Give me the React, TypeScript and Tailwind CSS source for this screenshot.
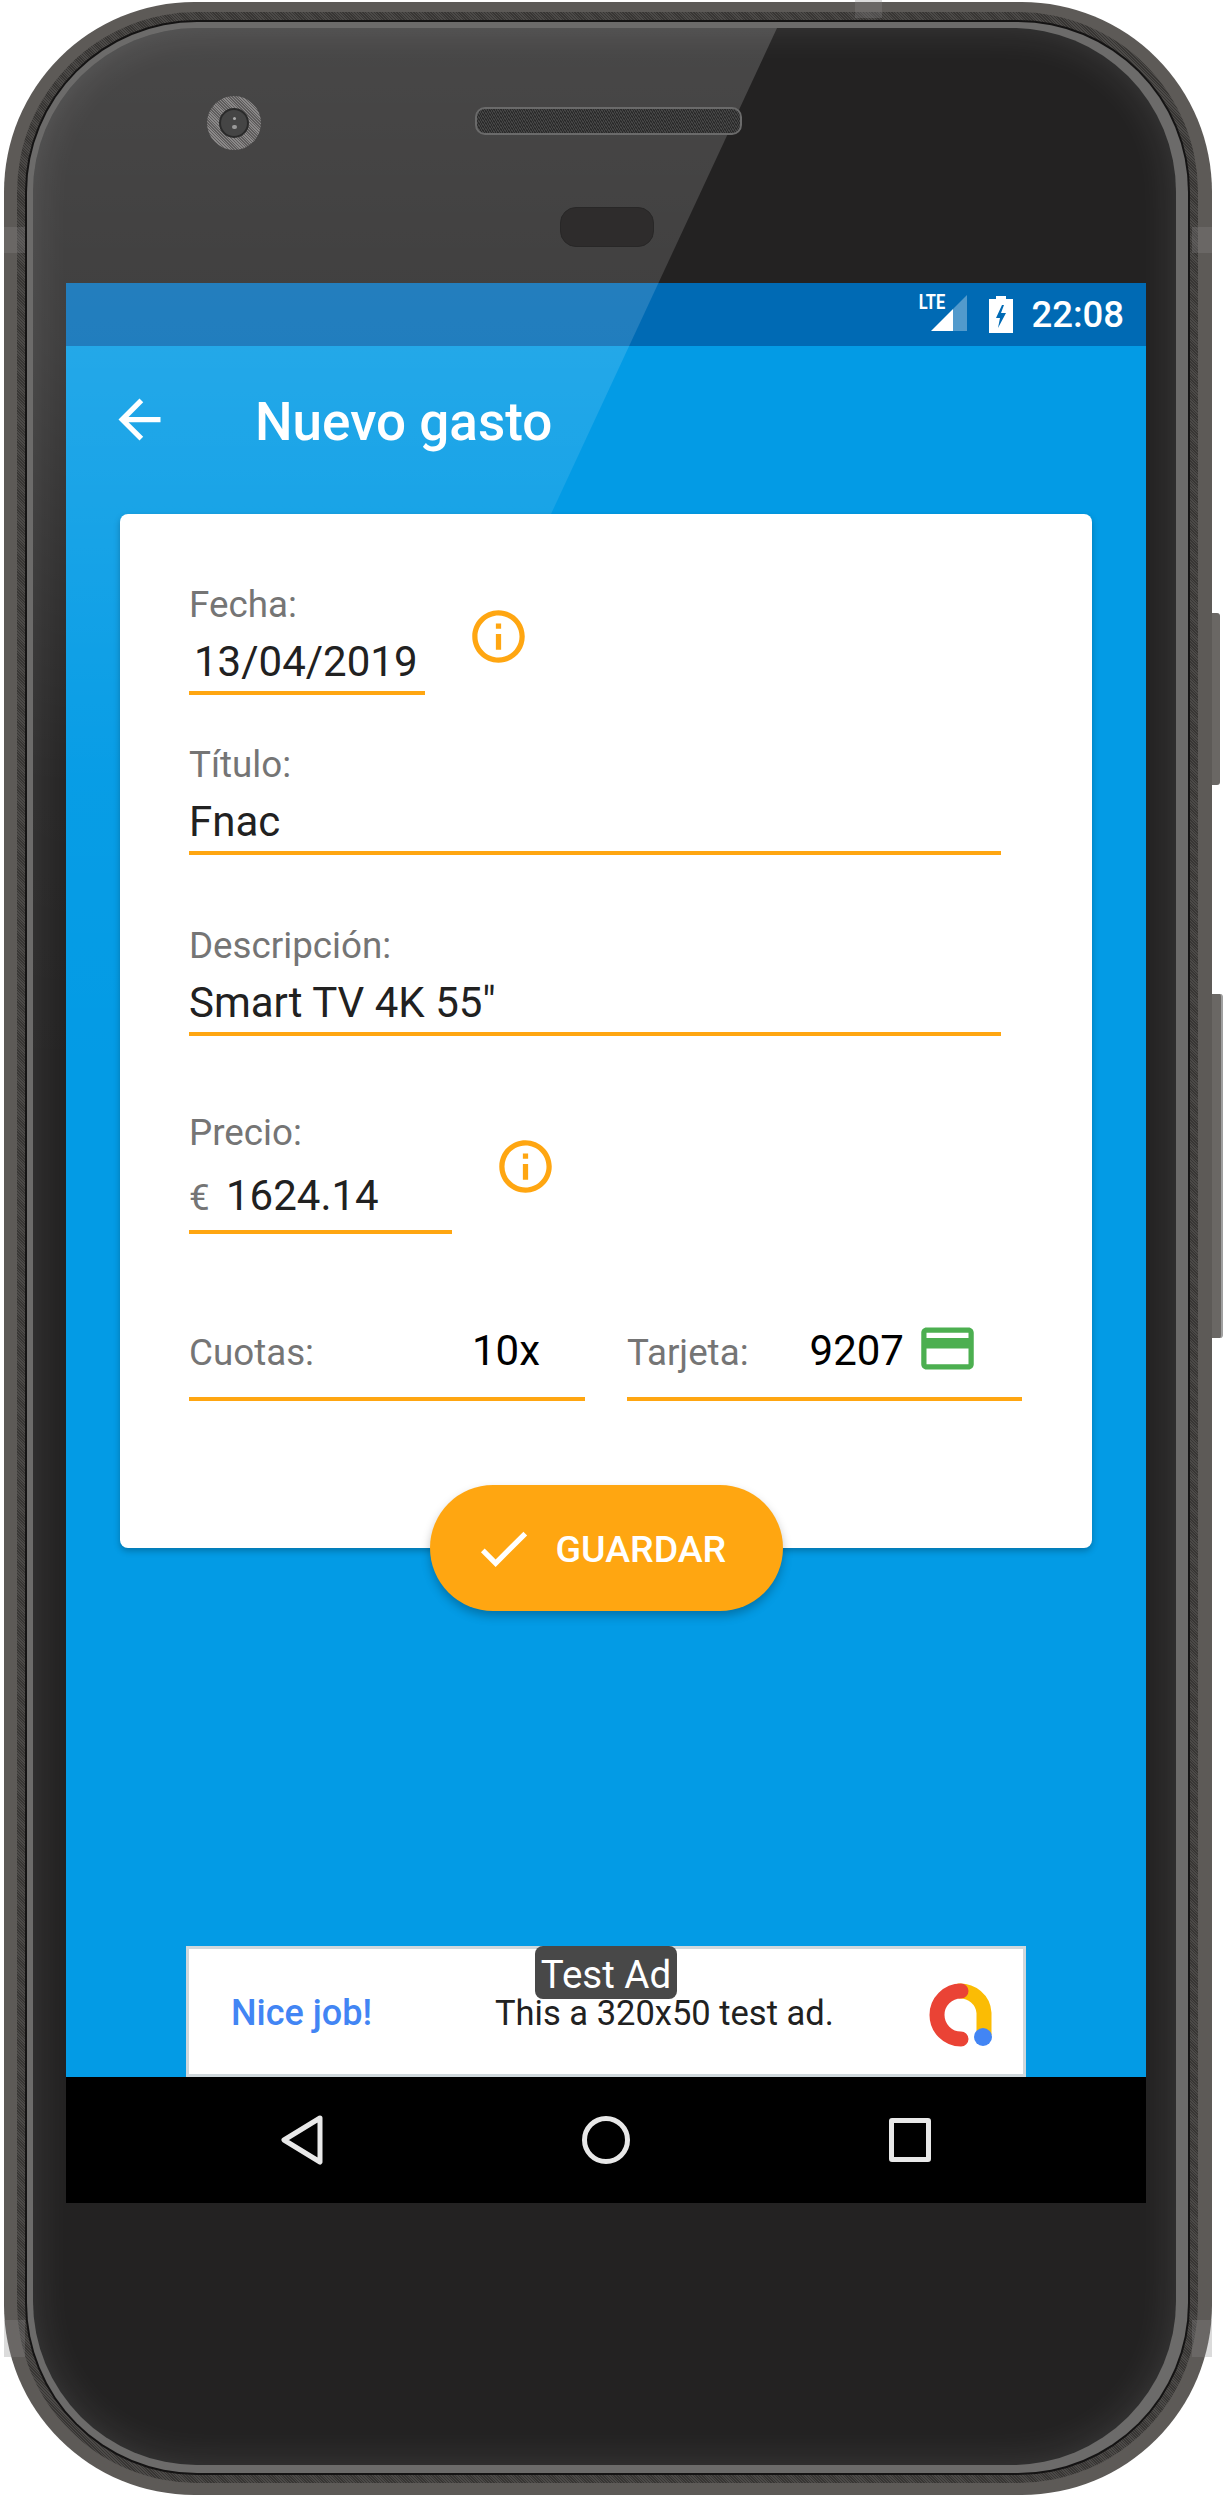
const font = { fontFamily: "Roboto, sans-serif" };

const InfoIcon = () => (
  <svg viewBox="0 0 24 24" className="w-[63px] h-[63px] fill-[#ffa611]">
    <path d="M11 7h2v2h-2zm0 4h2v6h-2zm1-9C6.48 2 2 6.48 2 12s4.48 10 10 10 10-4.48 10-10S17.52 2 12 2zm0 18c-4.41 0-8-3.59-8-8s3.59-8 8-8 8 3.59 8 8-3.59 8-8 8z" />
  </svg>
);

const Label = ({ children }: { children: React.ReactNode }) => (
  <div className="text-[36.75px] leading-[44px] text-[#757575]">{children}</div>
);

const Field = ({ label, value, className, inset }: { label: string; value: string; className: string; inset?: boolean }) => (
  <div className={className}>
    <Label>{label}</Label>
    <div className={`mt-[10px] pb-[4px] border-b-4 border-[#ffa611] text-[42px] leading-[50px] text-[#212121] ${inset ? "pl-[5px]" : ""}`}>
      {value}
    </div>
  </div>
);

const StatusBar = () => (
  <div className="h-[63px] bg-[#006ab4] flex items-center justify-end pr-[22px] shrink-0">
    <div className="relative w-[45px] h-[36px] mt-[-3px]">
      <svg viewBox="0 0 36 36" className="absolute right-0 top-0 w-[36px] h-[36px]">
        <polygon points="36,0 36,36 22,36 22,14" fill="#ffffff" fillOpacity="0.32" />
        <polygon points="22,14 22,36 0,36" fill="#ffffff" />
      </svg>
      <span className="absolute left-[-12px] top-[-5px] w-[44px] text-center scale-x-[.78] text-[21px] leading-[25px] font-bold text-white">
        LTE
      </span>
    </div>
    <svg viewBox="0 0 24 37" className="w-[24px] h-[37px] ml-[22px] mt-[-1px]">
      <path d="M7 0h10v3h7v34H0V3h7z M13 9l-6 13h4l-2 10 8-15h-5l3-8z" fill="#ffffff" fillRule="evenodd" />
    </svg>
    <span className="ml-[18px] text-[36.5px] leading-[44px] font-medium text-white">22:08</span>
  </div>
);

const Toolbar = () => (
  <div className="h-[168px] pl-[42px] pb-[21px] flex items-center shrink-0">
    <svg viewBox="0 0 24 24" className="w-[63px] h-[63px] fill-white">
      <path d="M20 11H7.83l5.59-5.59L12 4l-8 8 8 8 1.41-1.41L7.83 13H20v-2z" />
    </svg>
    <span className="ml-[84px] mt-[5px] text-[53px] leading-[62px] font-medium text-white">Nuevo gasto</span>
  </div>
);

const ExpenseCard = () => (
  <div className="relative z-10 w-[972px] h-[1034px] bg-white rounded-[8px] shadow-[0_3px_6px_rgba(0,0,0,0.25)] pl-[69px] pt-[69px]">
    <div className="flex items-start">
      <Field label="Fecha:" value="13/04/2019" className="w-[236px]" inset />
      <div className="ml-[42px] mt-[22px]">
        <InfoIcon />
      </div>
    </div>
    <div className="pl-0">
      <Field label="Título:" value="Fnac" className="w-[812px] mt-[48px]" />
      <Field label="Descripción:" value={'Smart TV 4K 55"'} className="w-[812px] mt-[69px]" />
    </div>
    <div className="flex items-start mt-[75px]">
      <div className="w-[263px]">
        <Label>Precio:</Label>
        <div className="mt-[16px] pb-[9px] border-b-4 border-[#ffa611] flex items-baseline text-[42px] leading-[50px] text-[#212121]">
          <span className="text-[36.75px] leading-[44px] text-[#757575] w-[37px]">€</span>
          <span>1624.14</span>
        </div>
      </div>
      <div className="ml-[42px] mt-[24px]">
        <InfoIcon />
      </div>
    </div>
    <div className="flex mt-[92px]">
      <div className="w-[396px] h-[75px] border-b-4 border-[#ffa611] flex items-baseline justify-between">
        <Label>Cuotas:</Label>
        <span className="mr-[45px] text-[42px] leading-[50px] text-black">10x</span>
      </div>
      <div className="ml-[42px] w-[395px] h-[75px] border-b-4 border-[#ffa611] flex items-baseline">
        <Label>Tarjeta:</Label>
        <span className="ml-[61px] text-[42px] leading-[50px] text-black">9207</span>
        <svg viewBox="0 0 24 24" className="w-[63px] h-[63px] fill-[#4caf50] ml-[12px] self-start mt-[-9px]">
          <path d="M20 4H4c-1.11 0-1.99.89-1.99 2L2 18c0 1.11.89 2 2 2h16c1.11 0 2-.89 2-2V6c0-1.11-.89-2-2-2zm0 14H4v-6h16v6zm0-10H4V6h16v2z" />
        </svg>
      </div>
    </div>
  </div>
);

const SaveButton = () => (
  <button className="relative z-10 mt-[-63px] w-[353px] h-[126px] rounded-full bg-[#ffa611] shadow-[0_5px_10px_rgba(0,0,0,0.25)] flex items-center pl-[42px]">
    <svg viewBox="0 0 24 24" className="w-[63px] h-[63px] fill-white">
      <path d="M9 16.17L4.83 12l-1.42 1.41L9 19 21 7l-1.41-1.41z" />
    </svg>
    <span className="ml-[21px] mt-[2px] text-[37.5px] leading-[44px] font-medium text-white">GUARDAR</span>
  </button>
);

const TestAd = () => (
  <div className="mt-auto w-[840px] h-[131px] bg-white border-[3px] border-[#cfd8dc] flex flex-col items-center relative shrink-0">
    <div className="absolute top-[-3px] left-[346px] w-[142px] h-[53px] bg-[#484848] rounded-[8px] flex items-center justify-center pt-[5px] text-[38.5px] leading-[48px] text-white">
      Test Ad
    </div>
    <div className="w-full h-full flex items-center pl-[42px] pt-[2px]">
      <span className="text-[36px] leading-[44px] font-medium text-[#4285f4]">Nice job!</span>
      <span className="ml-[123px] text-[34.5px] leading-[44px] text-[#212121]">This a 320x50 test ad.</span>
      <svg viewBox="0 0 64 64" className="w-[64px] h-[64px] ml-[94px] mt-[4px]">
        <path d="M56 52V30A24 23 0 0 0 30 8" fill="none" stroke="#fbbc04" strokeWidth="15" />
        <path d="M33 8A24 24 0 0 0 33 56" fill="none" stroke="#ea4335" strokeWidth="15" strokeLinecap="round" />
        <circle cx="55" cy="54" r="9" fill="#4285f4" />
      </svg>
    </div>
  </div>
);

const NavBar = () => (
  <div className="h-[126px] bg-black flex items-center shrink-0 pl-[213px]">
    <svg viewBox="0 0 44 52" className="w-[44px] h-[52px] fill-none stroke-[#e8e8e8] stroke-[5px]" strokeLinejoin="round">
      <path d="M41 4L5 26l36 22z" />
    </svg>
    <div className="ml-[259px] w-[48px] h-[48px] rounded-full border-[5px] border-[#e8e8e8]" />
    <div className="ml-[259px] w-[42px] h-[44px] rounded-[3px] border-[5px] border-[#e8e8e8]" />
  </div>
);

export default function App() {
  return (
    <div className="w-[1224px] h-[2498px] bg-white flex relative overflow-hidden" style={font}>
      {/* phone body, each layer is one ring of the frame */}
      <div className="relative ml-[4px] mt-[2px] w-[1208px] h-[2493px] rounded-[190px] bg-[#5d5a57] pt-[10px] pr-[14px] pb-[12px] pl-[13px]">
        <div className="h-full rounded-[180px] bg-[repeating-linear-gradient(45deg,#4c4a48_0px,#4c4a48_1px,#383634_1px,#383634_2px)] p-[8px]">
          <div className="h-full rounded-[172px] bg-[#141313] p-[2px]">
            <div className="h-full rounded-[170px] bg-[#6c6b6a] pt-[6px] pr-[12px] pb-[8px] pl-[6px]">
              <div className="relative isolate h-full rounded-[164px] overflow-hidden bg-[#232222] shadow-[inset_0_0_40px_rgba(255,255,255,0.12)]">
                <div className="relative z-10 flex pl-[174px] pt-[68px]">
                  <div className="w-[54px] h-[54px] rounded-full bg-[repeating-linear-gradient(45deg,#8a8888_0px,#8a8888_1px,#5f5d5d_1px,#5f5d5d_2px)] flex items-center justify-center">
                    <div className="w-[30px] h-[30px] rounded-full bg-[#454545] border-2 border-[#2a2a2a] flex flex-col items-center justify-center gap-[5px]">
                      <div className="w-[3px] h-[3px] rounded-full bg-[#aaa]" />
                      <div className="w-[5px] h-[4px] rounded-full bg-[#999]" />
                    </div>
                  </div>
                  <div className="ml-[214px] mt-[11px] w-[267px] h-[28px] rounded-[10px] border-2 border-[#6a6a6a] bg-[repeating-linear-gradient(60deg,#2b2b2b_0px,#2b2b2b_1px,#454545_1px,#454545_2px)]" />
                </div>
                <div className="relative z-10 ml-[527px] mt-[57px] w-[94px] h-[40px] rounded-[16px] bg-[#2e2c2c] border border-[#282727]" />
                <div className="ml-[33px] mt-[36px] w-[1080px] h-[1920px] flex flex-col bg-[#039be5]">
                  <StatusBar />
                  <Toolbar />
                  <div className="flex-1 flex flex-col items-center">
                    <ExpenseCard />
                    <SaveButton />
                    <TestAd />
                  </div>
                  <NavBar />
                </div>
                {/* glass reflection */}
                <svg viewBox="0 0 1143 2437" className="absolute inset-0 w-full h-full z-[5] pointer-events-none">
                  <defs>
                    <linearGradient id="glare" x1="0" y1="0" x2="0" y2="1">
                      <stop offset="0" stopColor="#fff" stopOpacity="0.17" />
                      <stop offset="0.2" stopColor="#fff" stopOpacity="0.13" />
                      <stop offset="0.47" stopColor="#fff" stopOpacity="0.02" />
                      <stop offset="0.66" stopColor="#fff" stopOpacity="0" />
                    </linearGradient>
                  </defs>
                  <polygon points="0,0 744,0 0,1600" fill="url(#glare)" />
                </svg>
              </div>
            </div>
          </div>
        </div>
        {/* antenna lines */}
        <div className="absolute left-[851px] top-[-2px] w-[27px] h-[18px] bg-[#888]/30" />
        <div className="absolute left-0 top-[225px] w-[21px] h-[26px] bg-[#888]/30" />
        <div className="absolute right-0 top-[225px] w-[20px] h-[26px] bg-[#888]/30" />
        <div className="absolute left-0 top-[2318px] w-[21px] h-[37px] bg-[#888]/30" />
        <div className="absolute right-0 top-[2318px] w-[20px] h-[37px] bg-[#888]/30" />
      </div>
      <div className="flex flex-col pt-[613px]">
        <div className="w-[8px] h-[172px] bg-[#6a6764] rounded-r-[3px]" />
        <div className="mt-[209px] w-[11px] h-[344px] bg-[#6a6764] rounded-r-[3px] border-r-2 border-[#a0a0a0]" />
      </div>
    </div>
  );
}
